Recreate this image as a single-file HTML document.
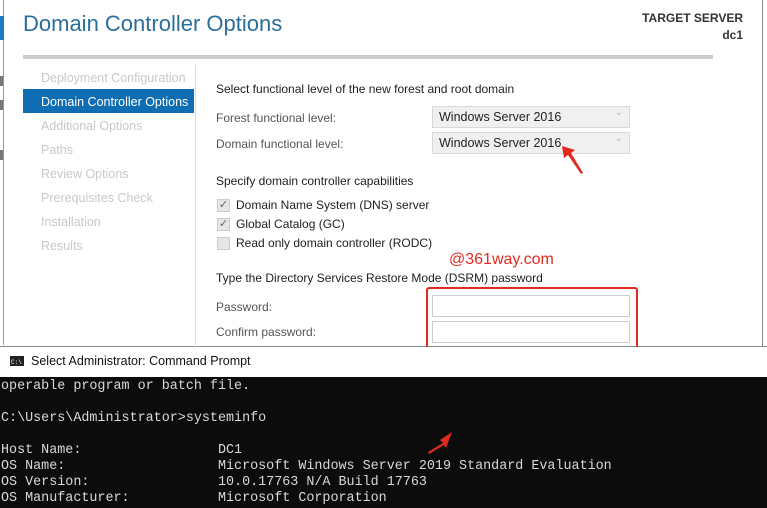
<!DOCTYPE html>
<html><head><meta charset="utf-8"><style>
*{margin:0;padding:0;box-sizing:border-box}
body{width:767px;height:508px;overflow:hidden;background:#fff;position:relative;font-family:"Liberation Sans",sans-serif}
.a{position:absolute;white-space:nowrap}
.nav{font-size:12.5px;color:#c8c8c8;left:41px}
.lbl{font-size:12px;color:#555;left:216px}
.txt{font-size:12px;color:#1e1e1e}
.sel{position:absolute;left:432px;width:198px;height:22px;background:#f0f0f0;border:1px solid #d9d9d9;font-size:12.5px;color:#222;padding:3px 0 0 6px}
.sel:after{content:"⌄";position:absolute;right:6px;top:0;color:#bbb;font-size:10px}
.cb{position:absolute;left:217px;width:13px;height:13px;background:#e6e6e6;border:1px solid #ccc;font-size:11px;color:#666;line-height:11px;text-align:center}
.inp{position:absolute;left:432px;width:198px;height:22px;background:#fff;border:1px solid #ccc}
.con{font-family:"Liberation Mono",monospace;font-size:13.4px;color:#d8d8d8;left:1px;white-space:pre}
</style></head><body>
<div class="a" style="left:0;top:0;width:4px;height:345px;border-right:1px solid #999;background:#fff"></div>
<div class="a" style="left:0;top:16px;width:4px;height:24px;background:#1e78c8"></div>
<div class="a" style="left:0;top:76px;width:3px;height:10px;background:#777"></div>
<div class="a" style="left:0;top:100px;width:3px;height:10px;background:#777"></div>
<div class="a" style="left:0;top:150px;width:3px;height:10px;background:#777"></div>
<div class="a" style="left:762px;top:0;width:1px;height:346px;background:#888"></div>
<div class="a" style="left:0;top:346px;width:767px;height:1px;background:#888"></div>
<div class="a" style="left:23px;top:11px;font-size:22px;color:#2a6e9a;font-weight:300">Domain Controller Options</div>
<div class="a" style="right:24px;top:10px;font-size:12px;color:#333;text-align:right;line-height:17px;font-weight:bold">TARGET SERVER<br>dc1</div>
<div class="a" style="left:23px;top:55px;width:690px;height:4px;background:#ccc"></div>
<div class="a" style="left:195px;top:65px;width:1px;height:282px;background:#ddd"></div>
<div class="a nav" style="top:71px">Deployment Configuration</div>
<div class="a" style="left:23px;top:89px;width:171px;height:24px;background:#0f6db4"></div>
<div class="a nav" style="top:95px;color:#fff">Domain Controller Options</div>
<div class="a nav" style="top:119px">Additional Options</div>
<div class="a nav" style="top:143px">Paths</div>
<div class="a nav" style="top:167px">Review Options</div>
<div class="a nav" style="top:191px">Prerequisites Check</div>
<div class="a nav" style="top:215px">Installation</div>
<div class="a nav" style="top:239px">Results</div>
<div class="a txt" style="left:216px;top:82px">Select functional level of the new forest and root domain</div>
<div class="a lbl" style="top:111px">Forest functional level:</div>
<div class="sel" style="top:106px">Windows Server 2016</div>
<div class="a lbl" style="top:137px">Domain functional level:</div>
<div class="sel" style="top:132px">Windows Server 2016</div>
<div class="a txt" style="left:216px;top:174px">Specify domain controller capabilities</div>
<div class="cb" style="top:199px">✓</div><div class="a txt" style="left:236px;top:198px">Domain Name System (DNS) server</div>
<div class="cb" style="top:218px">✓</div><div class="a txt" style="left:236px;top:217px">Global Catalog (GC)</div>
<div class="cb" style="top:237px"></div><div class="a txt" style="left:236px;top:236px">Read only domain controller (RODC)</div>
<div class="a" style="left:449px;top:251px;font-size:16px;color:#e02a20">@361way.com</div>
<div class="a txt" style="left:216px;top:271px">Type the Directory Services Restore Mode (DSRM) password</div>
<div class="a lbl" style="top:300px">Password:</div>
<div class="a lbl" style="top:325px">Confirm password:</div>
<div class="a" style="left:426px;top:287px;width:212px;height:62px;border:2.5px solid #e02a20;border-radius:3px"></div>
<div class="inp" style="top:295px"></div>
<div class="inp" style="top:321px"></div>
<div class="a" style="left:0;top:347px;width:767px;height:30px;background:#fff"></div>
<div class="a" style="left:10px;top:356px;width:14px;height:10px;background:#222"></div>
<div class="a" style="left:11px;top:359px;font-size:6px;color:#fff;font-family:'Liberation Mono',monospace">C:\</div>
<div class="a" style="left:31px;top:354px;font-size:12.5px;color:#111">Select Administrator: Command Prompt</div>
<div class="a" style="left:0;top:377px;width:767px;height:131px;background:#0c0c0c"></div>
<div class="a con" style="top:379px;line-height:16px;left:1px">operable program or batch file.

C:\Users\Administrator&gt;systeminfo

Host Name:                 DC1
OS Name:                   Microsoft Windows Server 2019 Standard Evaluation
OS Version:                10.0.17763 N/A Build 17763
OS Manufacturer:           Microsoft Corporation</div>
<svg class="a" style="left:0;top:0" width="767" height="508">
<polygon points="562,146 575,150 571,153 583,173 581,174 568,155 564,158" fill="#e02a20"/>
<polygon points="452,432 440,440 443,443 428,452 429,454 444,445 446,448" fill="#e02a20"/>
</svg>
</body></html>
